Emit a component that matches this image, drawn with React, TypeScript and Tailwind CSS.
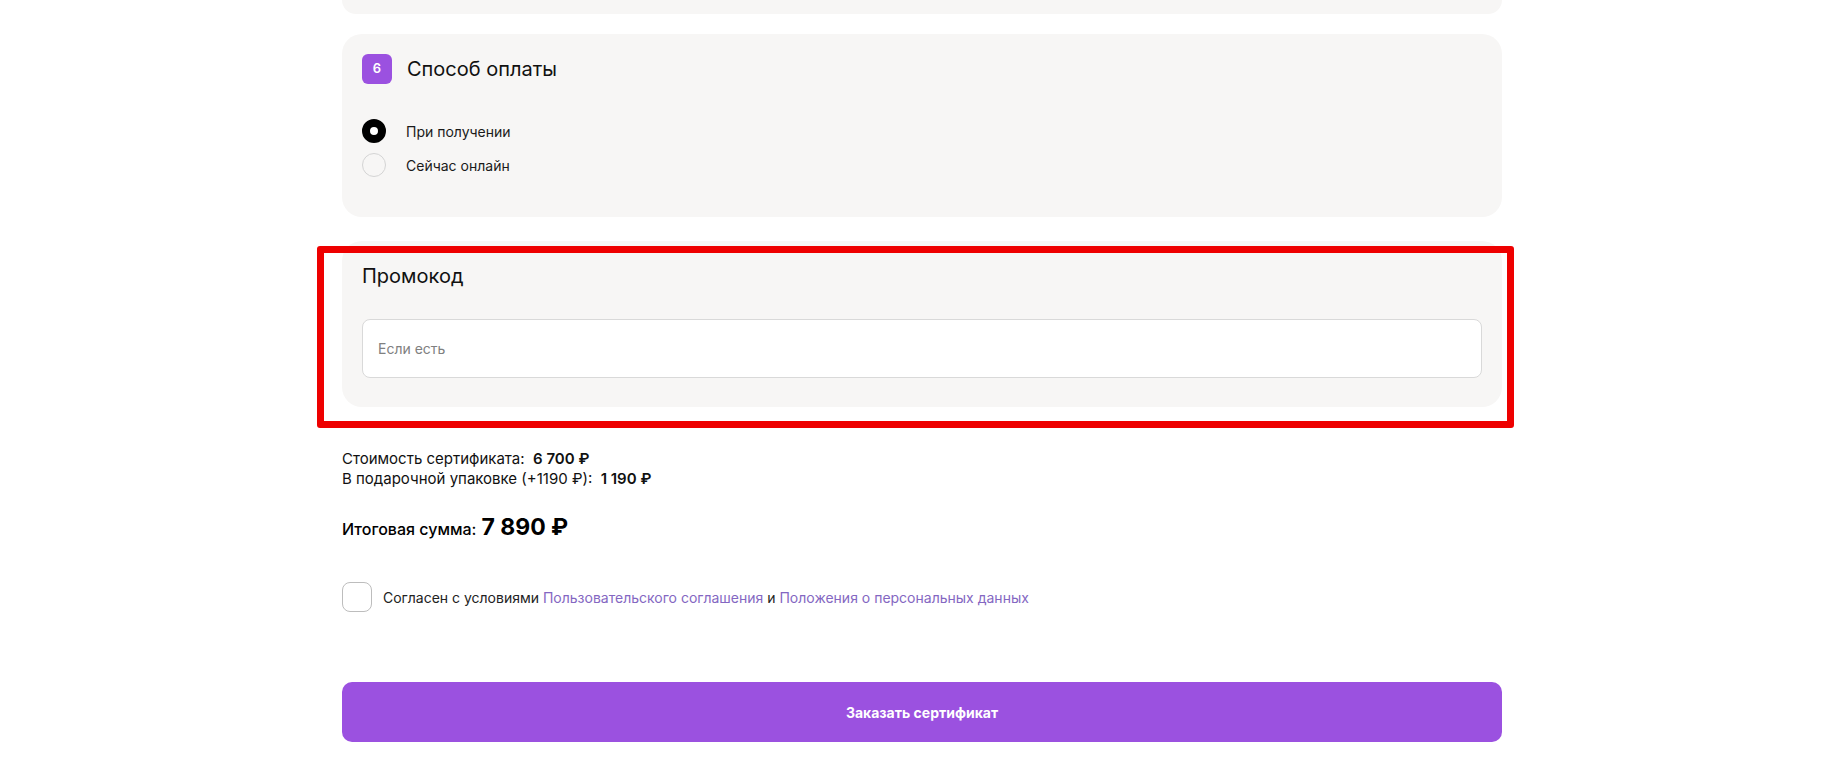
import React from "react"

const font = { fontFamily: "Inter, 'Noto Sans', sans-serif" }

function Radio({ checked, label }: { checked?: boolean; label: string }) {
  return (
    <label className="flex items-center gap-5 h-6 cursor-pointer">
      {checked ? (
        <span className="w-6 h-6 rounded-full border-[8px] border-black bg-white shrink-0" />
      ) : (
        <span className="w-6 h-6 rounded-full border border-[#d4d4d4] bg-[#f7f6f5] shrink-0" />
      )}
      <span className="text-[14px] text-[#1a1a1a]">{label}</span>
    </label>
  )
}

export default function App() {
  return (
    <div className="min-h-screen bg-white text-black" style={font}>
      <div className="relative w-[1160px] ml-[342px]">
        {/* end of previous step */}
        <div className="h-[14px] rounded-b-[20px] bg-[#f7f6f5]" />

        {/* Payment method */}
        <section className="mt-5 rounded-[20px] bg-[#f7f6f5] px-5 pt-5 pb-[40px]">
          <div className="flex items-center gap-[15px]">
            <span className="w-[30px] h-[30px] rounded-[6px] bg-[#9b51e0] text-white text-[13px] font-semibold flex items-center justify-center">
              6
            </span>
            <h2 className="text-[20px] leading-7 text-[#111]">Способ оплаты</h2>
          </div>
          <div className="mt-[35px] flex flex-col gap-[10px]">
            <Radio checked label="При получении" />
            <Radio label="Сейчас онлайн" />
          </div>
        </section>

        {/* Promo code */}
        <section className="relative mt-6 rounded-[20px] bg-[#f7f6f5] px-5 pt-[21px] pb-[29px]">
          <h2 className="text-[20px] leading-7 text-[#111]">Промокод</h2>
          <input
            placeholder="Если есть"
            className="mt-[29px] w-full h-[59px] rounded-[8px] border border-[#d9d9d9] bg-white px-[15px] text-[14px] outline-none placeholder:text-[#808080]"
          />
          <div className="absolute -left-[25px] -right-[12px] top-[5px] -bottom-[21px] border-[7px] border-[#ee0000] rounded-[3px] pointer-events-none" />
        </section>

        {/* Totals */}
        <div className="mt-[42px] text-[15px] leading-5 text-[#111]">
          <div>
            Стоимость сертификата:&nbsp; <span className="font-semibold">6 700 ₽</span>
          </div>
          <div>
            В подарочной упаковке (+1190 ₽):&nbsp; <span className="font-semibold">1 190 ₽</span>
          </div>
        </div>
        <div className="mt-[21px] flex items-baseline gap-[5px] h-8">
          <span className="text-[16px] font-medium">Итоговая сумма:</span>
          <span className="text-[23px] font-bold">7 890 ₽</span>
        </div>

        {/* Agreement */}
        <label className="mt-10 flex items-center gap-[11px]">
          <span className="w-[30px] h-[30px] rounded-[8px] border border-[#bdbdbd] bg-white shrink-0" />
          <span className="text-[14px] text-[#222]">
            Согласен с условиями{" "}
            <a className="text-[#8467c2]">Пользовательского соглашения</a> и{" "}
            <a className="text-[#8467c2]">Положения о персональных данных</a>
          </span>
        </label>

        <button className="mt-[70px] w-full h-[60px] rounded-[10px] bg-[#9b51e0] text-white text-[14px] font-bold">
          Заказать сертификат
        </button>
      </div>
    </div>
  )
}
